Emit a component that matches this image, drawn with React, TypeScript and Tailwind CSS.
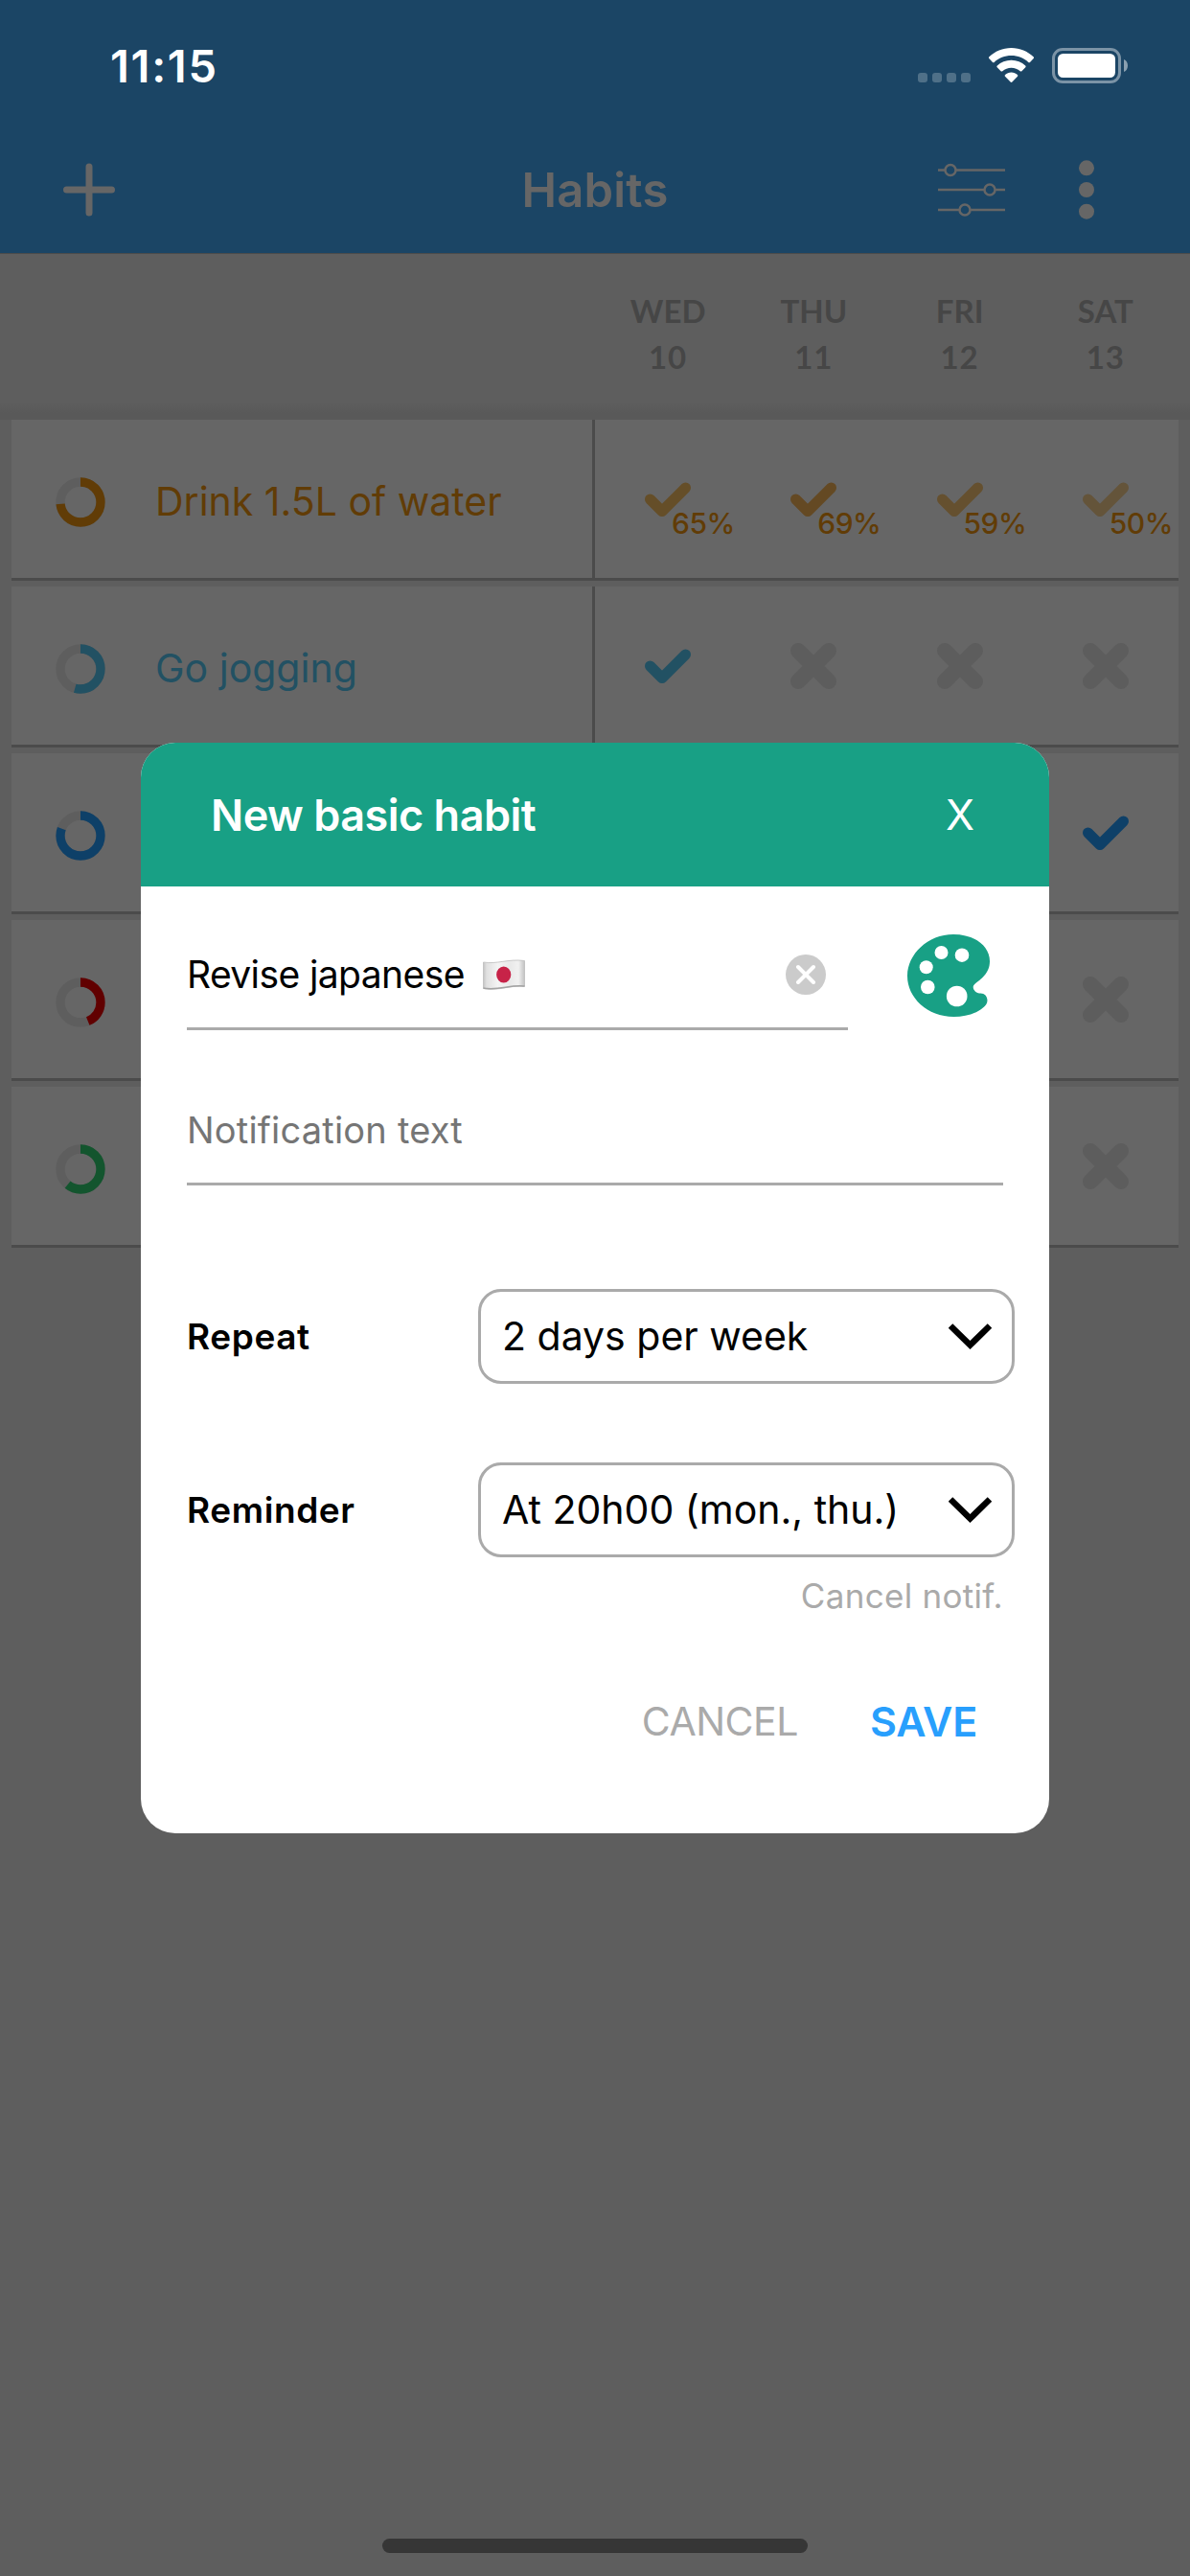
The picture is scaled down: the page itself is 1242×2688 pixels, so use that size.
import { useState } from 'react';

interface Habit {
  name: string;
  color: string;
  progress: number;
  days: DayState[];
}

interface DayState {
  done: boolean;
  color?: string;
  percent?: string;
}

const DAYS = [
  { label: 'WED', date: 10 },
  { label: 'THU', date: 11 },
  { label: 'FRI', date: 12 },
  { label: 'SAT', date: 13 },
];

const MISSED: DayState = { done: false };

const HABITS: Habit[] = [
  {
    name: 'Drink 1.5L of water',
    color: '#613c06',
    progress: 0.735,
    days: [
      { done: true, color: '#654e28', percent: '65%' },
      { done: true, color: '#644923', percent: '69%' },
      { done: true, color: '#65502f', percent: '59%' },
      { done: true, color: '#64543a', percent: '50%' },
    ],
  },
  {
    name: 'Go jogging',
    color: '#225163',
    progress: 0.545,
    days: [{ done: true, color: '#225163' }, MISSED, MISSED, MISSED],
  },
  {
    name: '',
    color: '#0e4068',
    progress: 0.807,
    days: [MISSED, MISSED, MISSED, { done: true, color: '#0e4068' }],
  },
  { name: '', color: '#610000', progress: 0.44, days: [MISSED, MISSED, MISSED, MISSED] },
  { name: '', color: '#13552e', progress: 0.61, days: [MISSED, MISSED, MISSED, MISSED] },
];

function StatusBar() {
  return (
    <div className="flex h-[136px] items-center justify-between pl-[115px] pr-[65px]">
      <span className="text-[47px] font-semibold leading-none tracking-[1.7px] text-white">11:15</span>
      <div className="flex h-[37px] items-end">
        <div className="mr-[19px] flex gap-[5px] pb-px">
          {[0, 1, 2, 3].map(i => (
            <span key={i} className="size-[10px] rounded-[3px] bg-[#4f7088]" />
          ))}
        </div>
        <svg className="mr-[19px] h-[37px] w-[47px]" viewBox="0 0 47 37" fill="#fff">
          <path d="M23.5 0C32.5 0 40.6 3.500 46.600 9.300c.6.6.6 1.200.1 1.800l-3.700 3.800c-.5.5-1.200.5-1.700 0C36.600 10.500 30.300 8 23.500 8S10.400 10.500 5.700 14.900c-.5.5-1.200.5-1.700 0L.3 11.100c-.5-.6-.5-1.200.1-1.800C6.400 3.500 14.500 0 23.500 0z" />
          <path d="M23.500 12.800c5.600 0 10.800 2.100 14.700 5.700.6.6.6 1.200.1 1.800l-3.900 3.900c-.5.5-1.100.5-1.700 0-2.500-2.200-5.700-3.500-9.200-3.500s-6.700 1.300-9.200 3.500c-.6.5-1.200.5-1.700 0l-3.900-3.900c-.5-.6-.5-1.200.1-1.800 3.900-3.600 9.100-5.700 14.700-5.700z" />
          <path d="M23.500 25.500c2.500 0 4.700.9 6.400 2.500.6.5.6 1.100.1 1.700l-5.600 5.900c-.5.600-1.300.600-1.800 0L17 29.700c-.5-.6-.5-1.200.1-1.700 1.700-1.600 3.900-2.500 6.400-2.500z" />
        </svg>
        <svg className="h-[37px] w-[79px]" viewBox="0 0 79 37">
          <rect x="1.500" y="1.500" width="69" height="34" rx="9.500" fill="none" stroke="#7b93a6" strokeWidth="3" />
          <rect x="6" y="6" width="60" height="25" rx="5.500" fill="#fff" />
          <path d="M75 12c2.700 1.200 4 3.600 4 6.500S77.700 23.800 75 25z" fill="#8ba0b0" />
        </svg>
      </div>
    </div>
  );
}

function NavBar() {
  return (
    <div className="grid h-[124px] grid-cols-3 items-center">
      <svg className="ml-[66px] size-[56px]" viewBox="0 0 56 56" stroke="#666" strokeWidth="7" strokeLinecap="round">
        <path d="M27 4v48M3.500 28h47" />
      </svg>
      <h1 className="text-center text-[49px] font-semibold leading-none tracking-[0.2px] text-[#666]">Habits</h1>
      <div className="flex items-center justify-end pr-[100px]">
        <svg className="mr-[77px] h-[56px] w-[70px]" viewBox="0 0 70 56" fill="#1b4565" stroke="#666" strokeWidth="2.500">
          <path d="M0 7.500h70M0 28h70M0 49h70" />
          <circle cx="13" cy="7.500" r="5.500" />
          <circle cx="54" cy="28" r="5.500" />
          <circle cx="28" cy="49" r="5.500" />
        </svg>
        <svg className="h-[62px] w-[16px]" viewBox="0 0 16 62" fill="#666">
          <circle cx="8" cy="8.300" r="8" />
          <circle cx="8" cy="31" r="8" />
          <circle cx="8" cy="53.700" r="8" />
        </svg>
      </div>
    </div>
  );
}

function ProgressRing({ value, color }: { value: number; color: string }) {
  return (
    <svg className="size-[52px] -rotate-90" viewBox="0 0 52 52" fill="none" strokeWidth="9.300">
      <circle cx="26" cy="26" r="21" stroke="#5e5e5e" />
      <circle cx="26" cy="26" r="21" stroke={color} pathLength={100} strokeDasharray={`${value * 100} 100`} />
    </svg>
  );
}

function DayCell({ day, textColor }: { day: DayState; textColor: string }) {
  return (
    <div className="relative flex items-center justify-center">
      {day.done ? (
        <svg
          className="h-[36px] w-[48px]"
          viewBox="0 0 48 36"
          fill="none"
          stroke={day.color}
          strokeWidth="11"
          strokeLinecap="round"
          strokeLinejoin="round"
        >
          <path d="M5.500 18 18 30.500 42.500 6" />
        </svg>
      ) : (
        <svg className="size-[48px]" viewBox="0 0 48 48" stroke="#5d5d5d" strokeWidth="16" strokeLinecap="round">
          <path d="M8 8l32 32M40 8L8 40" />
        </svg>
      )}
      {day.percent && (
        <span
          className="absolute left-[80px] top-[93px] text-[30px] font-medium leading-none tracking-[-0.5px]"
          style={{ color: textColor }}
        >
          {day.percent}
        </span>
      )}
    </div>
  );
}

function HabitRow({ habit }: { habit: Habit }) {
  return (
    <div className="flex h-[168px] border-b-3 border-[#4b4b4b] bg-[#666]">
      <div className="flex w-[609px] items-center border-r-3 border-[#4b4b4b] pl-[46px] pt-[7px]">
        <ProgressRing value={habit.progress} color={habit.color} />
        <span className="mb-[2px] ml-[52px] text-[41px] leading-none" style={{ color: habit.color }}>
          {habit.name}
        </span>
      </div>
      <div className="grid flex-1 grid-cols-4">
        {habit.days.map((day, i) => (
          <DayCell key={i} day={day} textColor={habit.color} />
        ))}
      </div>
    </div>
  );
}

function JapanFlag() {
  return (
    <svg className="h-[32px] w-[44px]" viewBox="0 0 44 32">
      <defs>
        <linearGradient id="cloth" x1="0" x2="1" y1="0" y2="0">
          <stop offset="0" stopColor="#c4c4c4" />
          <stop offset="0.08" stopColor="#e0e0e0" />
          <stop offset="0.35" stopColor="#f4f4f4" />
          <stop offset="0.65" stopColor="#e9e9e9" />
          <stop offset="0.85" stopColor="#f1f1f1" />
          <stop offset="1" stopColor="#c2c2c2" />
        </linearGradient>
      </defs>
      <path
        d="M.5 3C15 5.500 26-.8 43.500 1.500v27C29 26.500 16 33.500.5 30.500z"
        fill="url(#cloth)"
        stroke="#bdbdbd"
        strokeWidth="0.8"
      />
      <path d="M.5 30C16 33 29 26 43.500 28" fill="none" stroke="#a3a3a3" strokeWidth="1.500" />
      <ellipse cx="21.700" cy="16" rx="7.600" ry="8.600" fill="#c72348" />
    </svg>
  );
}

function PaletteIcon() {
  return (
    <svg className="size-[86px]" viewBox="0 0 86 86">
      <path
        d="M48 0C71 0 86 12.500 86 28c0 7.500-3 12.500-8 17.500-3.500 3.500-9.300 6.500-9.300 9.500 0 3.500 3.500 6.500 7.800 6.500 4 0 7 3 7 7.500 0 3-2 5.500-4.500 7.500C72 82.500 61 86 48.500 86 21 86 0 66 0 43.500S21 0 48 0z"
        fill="#18a085"
      />
      <g fill="#fff">
        <circle cx="35.500" cy="19" r="7" />
        <circle cx="57" cy="21.700" r="7.300" />
        <circle cx="19.700" cy="34.300" r="7" />
        <circle cx="21.300" cy="55" r="7.300" />
        <circle cx="51.700" cy="64.500" r="10.800" />
      </g>
    </svg>
  );
}

function Select({ value }: { value: string }) {
  return (
    <button
      type="button"
      className="flex h-[99px] w-[560px] shrink-0 items-center justify-between rounded-[24px] border-3 border-[#aaa] pl-[22px] pr-[21px]"
    >
      <span className="whitespace-nowrap text-[41px] leading-none">{value}</span>
      <svg className="h-[27px] w-[45px]" viewBox="0 0 45 27" fill="none" stroke="#000" strokeWidth="6.500">
        <path d="M2 2.500l20.500 20L43 2.500" />
      </svg>
    </button>
  );
}

function NewHabitDialog() {
  const [name, setName] = useState('Revise japanese');

  return (
    <div className="absolute left-[147px] top-[775px] h-[1138px] w-[948px] overflow-hidden rounded-[36px] bg-white text-black">
      <div className="flex h-[150px] items-center justify-between bg-[#18a085] pl-[73px] pr-[78px] text-white">
        <h2 className="text-[45px] font-semibold leading-none tracking-[-0.5px]">New basic habit</h2>
        <button type="button" className="text-[44px] leading-none">
          X
        </button>
      </div>

      <div className="px-[48px]">
        <div className="flex h-[150px] items-end">
          <div className="flex h-[114px] w-[690px] items-center border-b-3 border-[#aaa] pr-[23px]">
            <span className="whitespace-nowrap text-[39px] leading-none tracking-[-0.6px]">{name}</span>
            {name && <span className="ml-[19px]"><JapanFlag /></span>}
            <button type="button" className="ml-auto" onClick={() => setName('')}>
              <svg className="size-[42px]" viewBox="0 0 42 42">
                <circle cx="21" cy="21" r="21" fill="#cbcbcb" />
                <path d="M13 13l16 16M29 13L13 29" stroke="#fff" strokeWidth="4" strokeLinecap="round" />
              </svg>
            </button>
          </div>
          <div className="mb-[14px] ml-[62px]">
            <PaletteIcon />
          </div>
        </div>

        <div className="mt-[48px] flex h-[114px] items-center border-b-3 border-[#aaa]">
          <span className="text-[38px] leading-none tracking-[0.2px] text-[#757575]">Notification text</span>
        </div>

        <div className="mt-[108px] flex items-center">
          <span className="w-[304px] shrink-0 text-[37px] font-semibold leading-none tracking-[0.6px]">Repeat</span>
          <Select value="2 days per week" />
        </div>
        <div className="mt-[82px] flex items-center">
          <span className="w-[304px] shrink-0 text-[37px] font-semibold leading-none tracking-[0.6px]">Reminder</span>
          <Select value="At 20h00 (mon., thu.)" />
        </div>

        <div className="mt-[22px] flex h-[36px] items-center justify-end">
          <button type="button" className="text-[35px] leading-none tracking-[0.3px] text-[#aaa]">Cancel notif.</button>
        </div>

        <div className="mt-[91px] flex h-[44px] items-center justify-end gap-[75px] pr-[27px]">
          <button type="button" className="text-[41px] leading-none tracking-[-0.5px] text-[#aaa]">CANCEL</button>
          <button type="button" className="text-[43px] font-semibold leading-none tracking-[-0.2px] text-[#289ffd]">SAVE</button>
        </div>
      </div>
    </div>
  );
}

export default function App() {
  return (
    <div className="relative flex h-[2688px] w-[1242px] flex-col overflow-hidden bg-[#5e5e5e] font-['Inter',sans-serif]">
      <header className="h-[265px] border-b border-[#4b4b4b] bg-[#1b4565]">
        <StatusBar />
        <NavBar />
      </header>

      <div className="flex h-[155px] justify-end pr-[12px]">
        <div className="grid w-[609px] grid-cols-4 pt-[35px] font-['Lato',sans-serif] text-[33px] font-bold leading-[48px] text-[#464646]">
          {DAYS.map(day => (
            <div key={day.date} className="flex flex-col items-center">
              <span>{day.label}</span>
              <span className="tracking-[1px]">{day.date}</span>
            </div>
          ))}
        </div>
      </div>
      <div className="h-[18px] bg-linear-to-b from-[#5e5e5e] to-[#595959] to-60%" />

      <main className="flex flex-col gap-[6px] px-[12px]">
        {HABITS.map((habit, i) => (
          <HabitRow key={i} habit={habit} />
        ))}
      </main>

      <div className="mb-[24px] mt-auto h-[15px] w-[444px] self-center rounded-full bg-[#363636]" />

      <NewHabitDialog />
    </div>
  );
}
